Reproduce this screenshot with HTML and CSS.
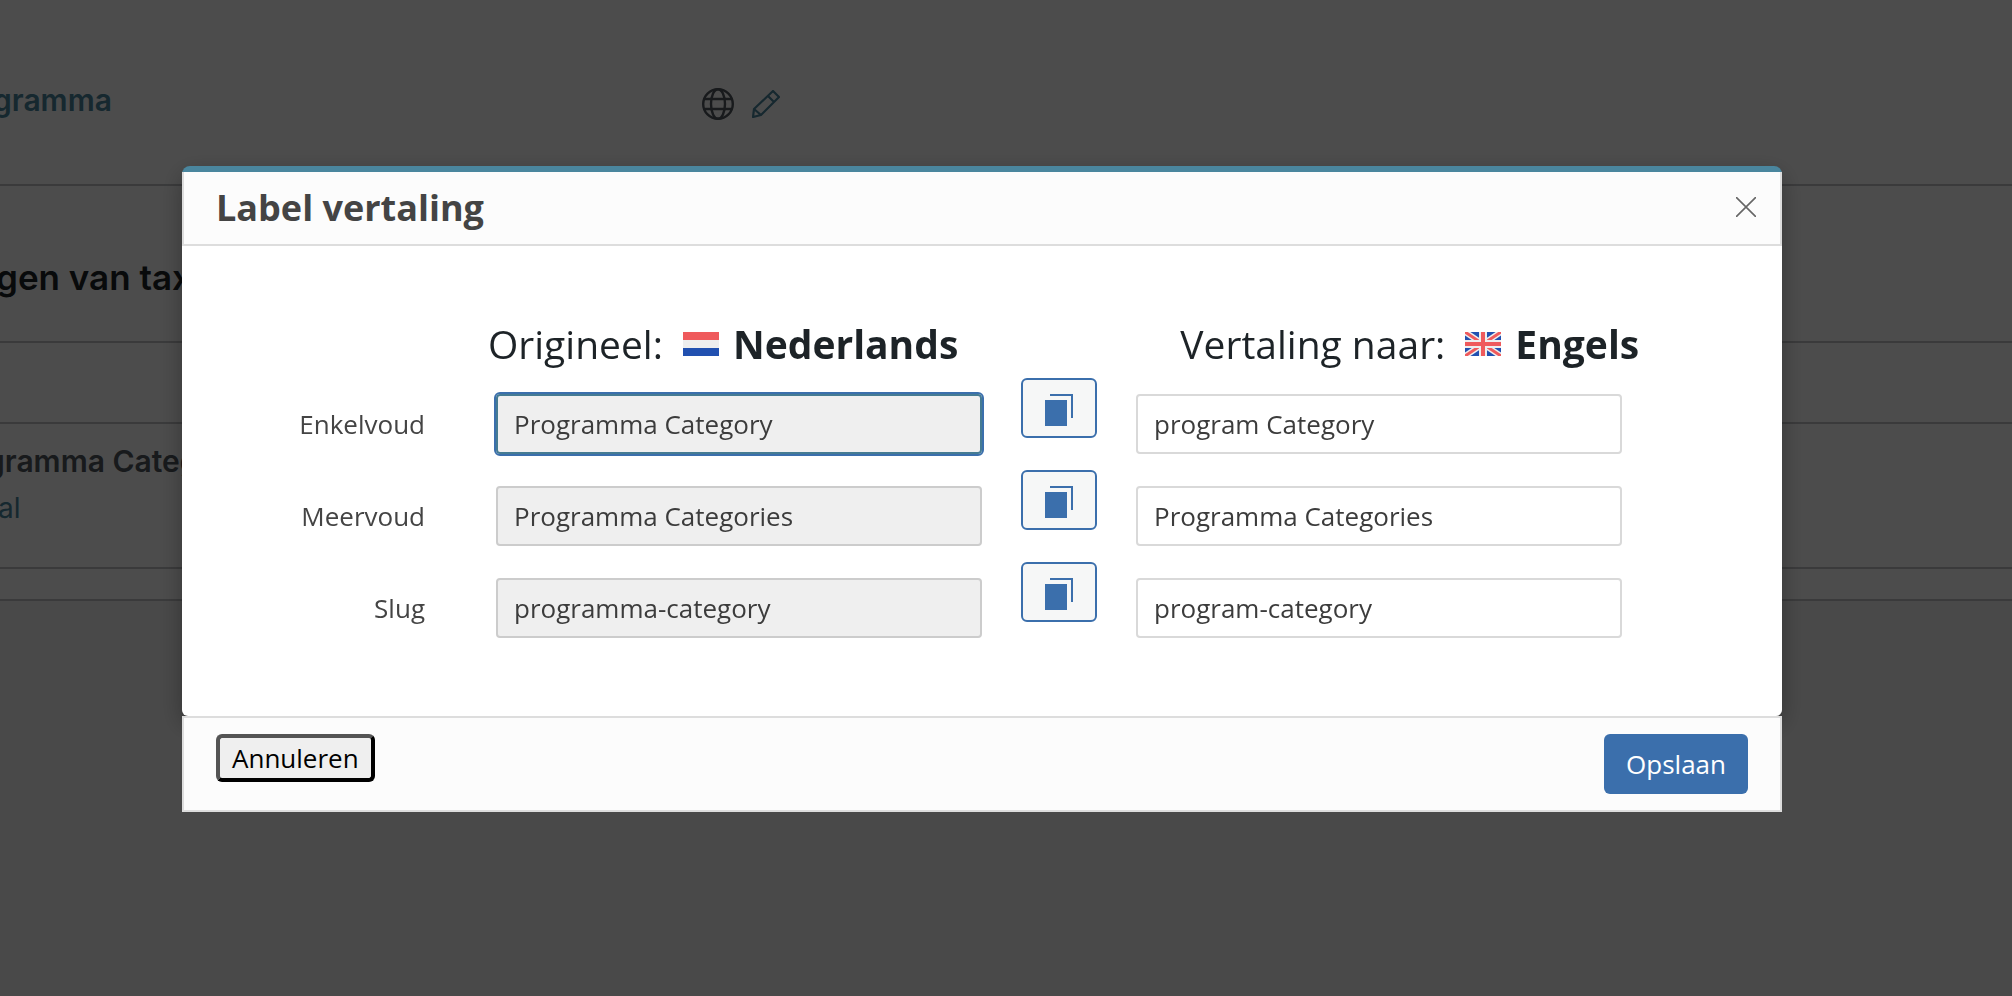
FILE: index.html
```html
<!DOCTYPE html>
<html lang="nl">
<head>
<meta charset="utf-8">
<title>Label vertaling</title>
<link rel="stylesheet" href="styles.css">
</head>
<body>
<main class="page">
  <section class="page-row page-row-top">
    <a class="page-link" href="#">gramma</a>
    <span class="page-icons">
      <svg class="icon-globe" viewBox="0 0 32 32" fill="none" stroke="currentColor" stroke-width="2.4"><circle cx="16" cy="16" r="14.8"/><ellipse cx="16" cy="16" rx="7" ry="14.8"/><path d="M3 11h26M3 21h26"/></svg>
      <svg class="icon-pencil" viewBox="0 0 28 28" fill="none" stroke="currentColor" stroke-width="2.2" stroke-linejoin="round"><path d="M21 1l6 6L9 25l-8 2 1-8zM16 6l6 6M2 19l7 6"/></svg>
    </span>
  </section>
  <section class="page-row page-row-title"><h2 class="page-title">gen van tax</h2></section>
  <section class="page-row page-row-empty"></section>
  <section class="page-row page-row-item">
    <strong class="item-name">gramma Categ</strong>
    <a class="item-link" href="#">al</a>
  </section>
  <section class="page-row page-row-gap"></section>
  <section class="page-rest"></section>
</main>

<div class="overlay">
  <form class="modal" role="dialog" aria-labelledby="modal-title">
    <div class="panel">
      <header class="panel-header">
        <h1 class="panel-title" id="modal-title">Label vertaling</h1>
        <button class="close" type="button" aria-label="Sluiten"><svg class="icon-close" viewBox="0 0 20 20" fill="none" stroke="currentColor" stroke-width="1.6"><path d="M0 0l20 20M20 0L0 20"/></svg></button>
      </header>
      <div class="panel-body">
        <div class="languages">
          <h2 class="language">Origineel:
            <svg class="flag" viewBox="0 0 36 24"><path fill="#ef5a5c" d="M0 0h36v8H0z"/><path fill="#eee" d="M0 8h36v8H0z"/><path fill="#2150b0" d="M0 16h36v8H0z"/></svg>
            <strong>Nederlands</strong></h2>
          <h2 class="language">Vertaling naar:
            <svg class="flag" viewBox="0 0 36 24"><path fill="#2150b0" d="M0 0h36v24H0z"/><path stroke="#eee" stroke-width="6" d="M0 0l36 24M36 0L0 24"/><path stroke="#ef5a5c" stroke-width="3" d="M0 0l36 24M36 0L0 24"/><path fill="#eee" d="M14 0h8v24h-8zM0 8h36v8H0z"/><path fill="#ef5a5c" d="M16 0h4v24h-4zM0 10h36v4H0z"/></svg>
            <strong>Engels</strong></h2>
        </div>
        <div class="field-row">
          <label class="label" for="singular">Enkelvoud</label>
          <input class="field field-source field-active" id="singular" type="text" value="Programma Category" readonly>
          <button class="copy" type="button" aria-label="Kopieer enkelvoud"><svg class="icon-copy" viewBox="0 0 28 32"><path fill="currentColor" d="M0 6h22v26H0z"/><path fill="none" stroke="currentColor" stroke-width="2" d="M5 1h22v23"/></svg></button>
          <input class="field" type="text" value="program Category" aria-label="Enkelvoud Engels">
        </div>
        <div class="field-row">
          <label class="label" for="plural">Meervoud</label>
          <input class="field field-source" id="plural" type="text" value="Programma Categories" readonly>
          <button class="copy" type="button" aria-label="Kopieer meervoud"><svg class="icon-copy" viewBox="0 0 28 32"><path fill="currentColor" d="M0 6h22v26H0z"/><path fill="none" stroke="currentColor" stroke-width="2" d="M5 1h22v23"/></svg></button>
          <input class="field" type="text" value="Programma Categories" aria-label="Meervoud Engels">
        </div>
        <div class="field-row">
          <label class="label" for="slug">Slug</label>
          <input class="field field-source" id="slug" type="text" value="programma-category" readonly>
          <button class="copy" type="button" aria-label="Kopieer slug"><svg class="icon-copy" viewBox="0 0 28 32"><path fill="currentColor" d="M0 6h22v26H0z"/><path fill="none" stroke="currentColor" stroke-width="2" d="M5 1h22v23"/></svg></button>
          <input class="field" type="text" value="program-category" aria-label="Slug Engels">
        </div>
      </div>
    </div>
    <footer class="modal-footer">
      <button class="cancel" type="button">Annuleren</button>
      <button class="save" type="submit">Opslaan</button>
    </footer>
  </form>
</div>
</body>
</html>
```
FILE: styles.css
```css
* {
  box-sizing: border-box;
}

body {
  margin: 0;
  color: #1d2327;
  font-family: "Open Sans", "Noto Sans", sans-serif;
  font-size: 26px;
}

h1,
h2 {
  margin: 0;
}

svg {
  display: block;
}

/* Page behind the dialog */

.page {
  display: flex;
  flex-direction: column;
  min-height: 100vh;
  overflow: hidden;
  font-family: Inter, sans-serif;
}

.page-row {
  border-bottom: 2px solid #c3c4c7;
}

.page-row-top {
  display: grid;
  grid-template-columns: 702px 1fr;
  height: 186px;
  padding-top: 82px;
}

.page-link,
.item-link {
  color: #4a869e;
  text-decoration: none;
}

.page-link {
  margin-left: -7px;
  font-size: 30px;
  font-weight: 600;
  line-height: 36px;
}

.page-icons {
  display: flex;
  align-items: center;
  gap: 18px;
  height: 44px;
  color: #50575e;
}

.icon-globe {
  width: 32px;
  height: 32px;
}

.icon-pencil {
  width: 28px;
  height: 28px;
  color: #4a869e;
}

.page-row-title {
  height: 157px;
  padding-top: 69px;
}

.page-title {
  margin-left: -4px;
  font-size: 35px;
  font-weight: 600;
  line-height: 44px;
}

.page-row-empty {
  height: 81px;
}

.page-row-item {
  display: flex;
  flex-direction: column;
  gap: 11px;
  height: 145px;
  padding-top: 19px;
}

.item-name {
  margin-left: -14px;
  color: #50575e;
  font-size: 30px;
  font-weight: 600;
  line-height: 36px;
}

.item-link {
  margin-left: -2px;
  font-size: 28px;
  line-height: 36px;
}

.page-row-gap {
  height: 32px;
}

.page-rest {
  flex: 1;
  background: #f4f4f4;
}

/* Dialog */

.overlay {
  position: fixed;
  inset: 0;
  padding: 166px 230px 0 182px;
  background: rgba(0, 0, 0, 0.7);
}

.panel {
  background: #fff;
  border-top: 6px solid #4a869e;
  border-radius: 8px 8px 6px 6px;
  box-shadow: 0 8px 24px rgba(0, 0, 0, 0.3);
}

.panel-header {
  display: flex;
  align-items: center;
  justify-content: space-between;
  height: 74px;
  padding: 0 24px 0 32px;
  background: #fcfcfc;
  border: solid #ddd;
  border-width: 0 2px 2px;
}

.panel-title {
  color: #444;
  font-size: 36px;
  font-weight: 700;
  line-height: 48px;
}

.close {
  padding: 0 0 2px;
  background: none;
  border: 0;
  color: #666;
}

.icon-close {
  width: 20px;
  height: 20px;
}

.panel-body {
  display: flex;
  flex-direction: column;
  gap: 16px;
  padding: 70px 160px 78px 0;
}

.languages {
  display: flex;
  gap: 222px;
  margin-bottom: -10px;
  padding-left: 306px;
  white-space: nowrap;
}

.language {
  display: flex;
  align-items: center;
  gap: 20px;
  font-size: 39px;
  font-weight: 400;
  line-height: 56px;
}

.language strong {
  margin-left: -6px;
  font-weight: 700;
}

.flag {
  width: 36px;
  height: 24px;
}

.field-row {
  display: grid;
  grid-template-columns: 275px 1fr 76px 1fr;
  gap: 39px;
  align-items: end;
}

.label {
  padding-right: 32px;
  color: #444;
  line-height: 60px;
  text-align: right;
}

.field {
  width: 100%;
  height: 60px;
  padding: 0 16px;
  background: #fff;
  border: 2px solid #d9d9d9;
  border-radius: 4px;
  color: #3c3c3c;
  font: inherit;
}

.field-source {
  background: #efefef;
  border-color: #ccc;
}

.field-active {
  border-color: #457b93;
  outline: 2px solid #3b6fac;
}

.copy {
  display: flex;
  align-items: center;
  justify-content: center;
  height: 60px;
  margin-bottom: 16px;
  padding: 4px 0 0;
  background: #f6f7f7;
  border: 2px solid #3b6fac;
  border-radius: 6px;
  color: #3b6fac;
}

.icon-copy {
  width: 28px;
  height: 32px;
}

.modal-footer {
  position: relative;
  display: flex;
  align-items: flex-start;
  justify-content: space-between;
  padding: 16px 32px;
  background: #fcfcfc;
  border: 2px solid #ddd;
}

.cancel {
  height: 48px;
  padding: 0 12px;
  background: #efefef;
  border: 4px outset #000;
  border-radius: 6px;
  color: #000;
  font: inherit;
  line-height: 36px;
}

.save {
  height: 60px;
  padding: 0 22px;
  background: #3b6fac;
  border: 0;
  border-radius: 6px;
  color: #fff;
  font: inherit;
}
```
